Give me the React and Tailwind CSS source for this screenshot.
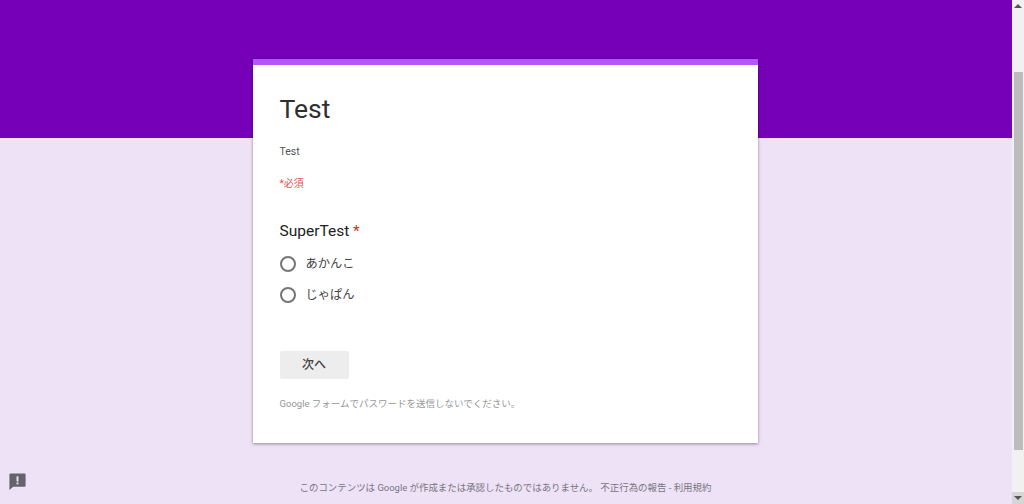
import React from 'react';

const cjk = "font-[Roboto,'Noto_Sans_CJK_JP',sans-serif]";

const Choice = ({ label }) => (
  <div className="flex items-center h-[31.5px]">
    <div className="w-3 h-3 rounded-full border-2 border-[#757575] box-content" />
    <span className="ml-[10px] text-[12.25px] text-[#444]">{label}</span>
  </div>
);

const App = () => {
  return (
    <div className={`flex h-[504px] w-[1024px] overflow-hidden ${cjk}`}>
      <div className="relative flex-1 bg-[#eee2f7] overflow-hidden">
        {/* Purple banner */}
        <div className="absolute inset-x-0 top-0 h-[138px] bg-[#7500b8]" />

        <div className="relative ml-[253px] mt-[59px] w-[505px] h-[384px] bg-white border-t-[6px] border-[#b455f5] shadow-[0_1px_3px_rgba(0,0,0,0.4)] px-[26.5px]">
          <h1 className="mt-[26px] text-[26.5px] leading-[36px] text-[#2f2f2f]">Test</h1>
          <p className="mt-[18px] text-[10.5px] leading-[14px] text-[#555]">Test</p>
          <p className="mt-[18px] text-[10px] leading-[14px] text-[#e8554a]">*必須</p>
          <h2 className="mt-[29px] text-[15.5px] leading-[22px] text-[#222]">
            SuperTest <span className="text-[#e8261c]">*</span>
          </h2>
          <div className="mt-[6px]">
            <Choice label="あかんこ" />
            <Choice label="じゃぱん" />
          </div>
          <button className="mt-[40px] w-[69px] h-[28px] rounded-[2px] bg-[#ededed] text-[12px] text-[#444] font-medium">
            次へ
          </button>
          <p className="mt-[18px] text-[9.5px] leading-[14px] text-[#979797]">
            Google フォームでパスワードを送信しないでください。
          </p>
        </div>

        <p className="relative mt-[38px] ml-[-1px] text-center text-[9.45px] leading-[14px] text-[#79757f]">
          このコンテンツは Google が作成または承認したものではありません。 不正行為の報告 - 利用規約
        </p>

        {/* Report button */}
        <svg className="absolute left-[8px] bottom-[13px] w-[19px] h-[19px]" viewBox="0 0 20 20">
          <path d="M2.5 1.5h15a1 1 0 0 1 1 1v12a1 1 0 0 1-1 1H5.5l-4 3.5V2.5a1 1 0 0 1 1-1z" fill="#66616e" />
          <rect x="9" y="4.5" width="2" height="5.5" fill="#eee2f7" />
          <rect x="9" y="11" width="2" height="2" fill="#eee2f7" />
        </svg>
      </div>

      {/* Scrollbar */}
      <div className="flex flex-col w-3 bg-[#f1f1f1]">
        <div className="flex items-center justify-center h-3">
          <div className="w-0 h-0 border-x-[4px] border-x-transparent border-b-[4px] border-b-[#555]" />
        </div>
        <div className="mt-[60px] mx-auto w-[9px] h-[378px] bg-[#bcbcbc]" />
        <div className="mt-auto flex items-center justify-center h-[12px] bg-[#d6d6d6]">
          <div className="w-0 h-0 border-x-[4px] border-x-transparent border-t-[4px] border-t-[#555]" />
        </div>
      </div>
    </div>
  );
};

export default App;
